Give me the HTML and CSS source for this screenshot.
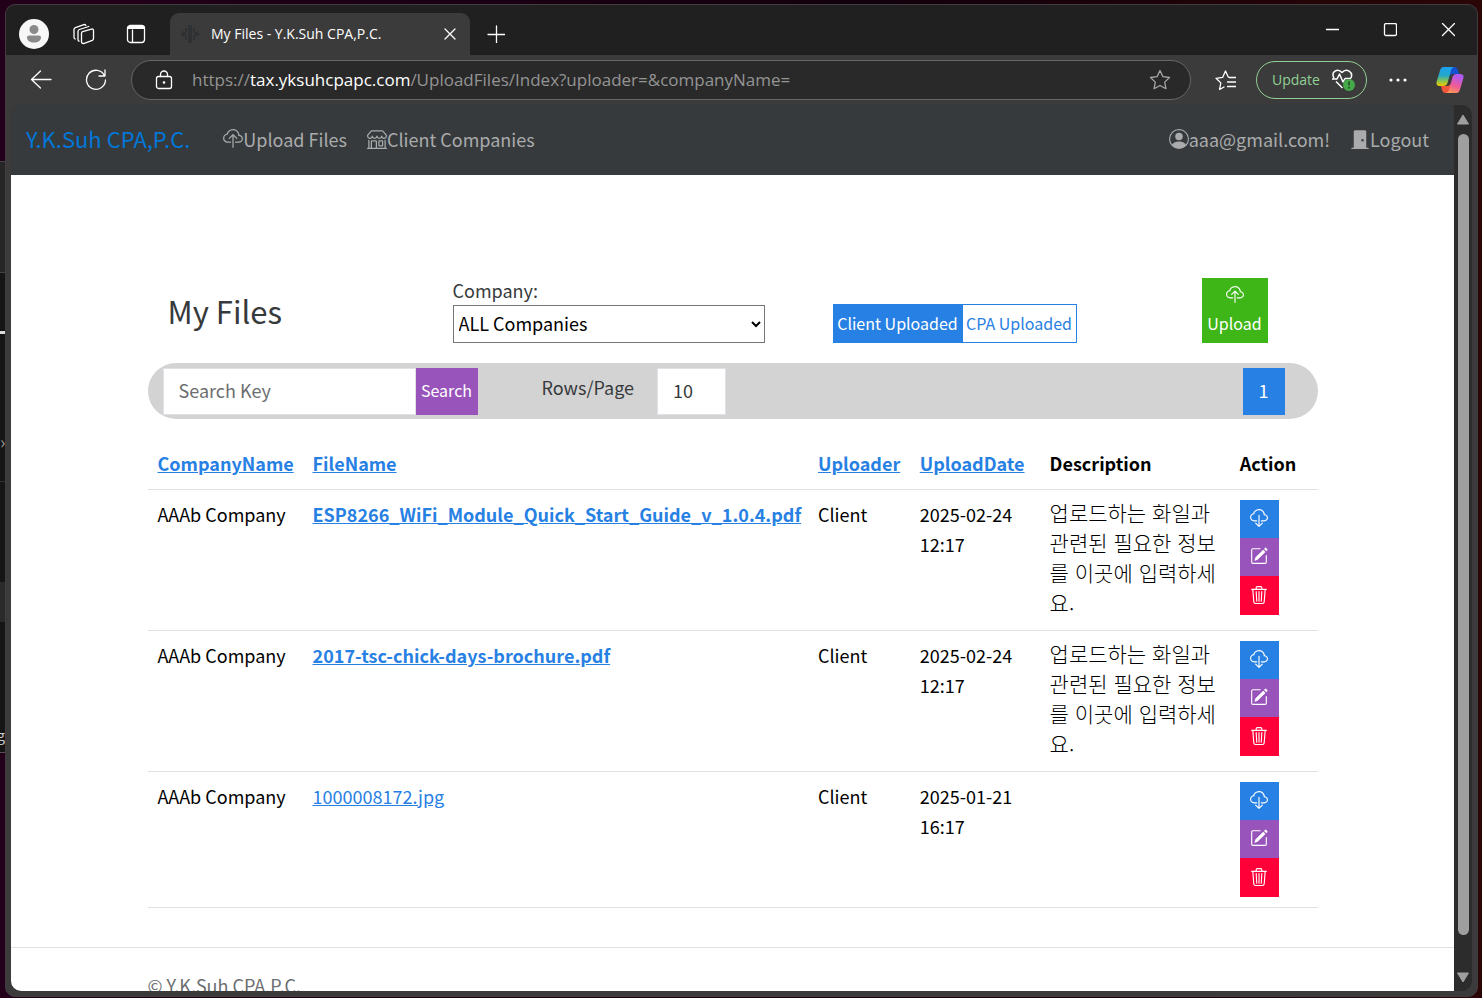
FILE: index.html
```html
<!DOCTYPE html>
<html lang="en">
<head>
    <meta charset="UTF-8">
    <meta name="viewport" content="width=device-width, initial-scale=1.0">
    <title>My Files - Y.K.Suh CPA,P.C.</title>
    <link rel="stylesheet" href="styles.css">
</head>
<body>
    <!-- Shared icons -->
    <svg class="sprite" aria-hidden="true">
        <symbol id="cloud-upload" viewBox="0 0 16 16">
            <path d="M4.406 1.342A5.53 5.53 0 0 1 8 0c2.69 0 4.923 2 5.166 4.579C14.758 4.804 16 6.137 16 7.773 16 9.569 14.502 11 12.687 11H10a.5.5 0 0 1 0-1h2.688C13.979 10 15 8.988 15 7.773c0-1.216-1.02-2.228-2.313-2.228h-.5v-.5C12.188 2.825 10.328 1 8 1a4.53 4.53 0 0 0-2.941 1.1c-.757.652-1.153 1.438-1.153 2.055v.448l-.445.049C2.064 4.805 1 5.952 1 7.318 1 8.785 2.23 10 3.781 10H6a.5.5 0 0 1 0 1H3.781C1.708 11 0 9.366 0 7.318c0-1.763 1.266-3.223 2.942-3.593.143-.863.698-1.723 1.464-2.383z"/>
            <path d="M7.646 4.146a.5.5 0 0 1 .708 0l3 3a.5.5 0 0 1-.708.708L8.5 5.707V14.5a.5.5 0 0 1-1 0V5.707L5.354 7.854a.5.5 0 1 1-.708-.708l3-3z"/>
        </symbol>
        <symbol id="cloud-download" viewBox="0 0 16 16">
            <path d="M4.406 1.342A5.53 5.53 0 0 1 8 0c2.69 0 4.923 2 5.166 4.579C14.758 4.804 16 6.137 16 7.773 16 9.569 14.502 11 12.687 11H10a.5.5 0 0 1 0-1h2.688C13.979 10 15 8.988 15 7.773c0-1.216-1.02-2.228-2.313-2.228h-.5v-.5C12.188 2.825 10.328 1 8 1a4.53 4.53 0 0 0-2.941 1.1c-.757.652-1.153 1.438-1.153 2.055v.448l-.445.049C2.064 4.805 1 5.952 1 7.318 1 8.785 2.23 10 3.781 10H6a.5.5 0 0 1 0 1H3.781C1.708 11 0 9.366 0 7.318c0-1.763 1.266-3.223 2.942-3.593.143-.863.698-1.723 1.464-2.383z"/>
            <path d="M7.646 15.854a.5.5 0 0 0 .708 0l3-3a.5.5 0 0 0-.708-.708L8.5 14.293V5.5a.5.5 0 0 0-1 0v8.793l-2.146-2.147a.5.5 0 0 0-.708.708l3 3z"/>
        </symbol>
        <symbol id="shop" viewBox="0 0 16 16">
            <path d="M2.97 1.35A1 1 0 0 1 3.73 1h8.54a1 1 0 0 1 .76.35l2.609 3.044A1.5 1.5 0 0 1 16 5.37v.255a2.375 2.375 0 0 1-4.25 1.458A2.371 2.371 0 0 1 9.875 8 2.37 2.37 0 0 1 8 7.083 2.37 2.37 0 0 1 6.125 8a2.37 2.37 0 0 1-1.875-.917A2.375 2.375 0 0 1 0 5.625V5.37a1.5 1.5 0 0 1 .361-.976l2.61-3.045zm1.78 4.275a1.375 1.375 0 0 0 2.75 0 .5.5 0 0 1 1 0 1.375 1.375 0 0 0 2.75 0 .5.5 0 0 1 1 0 1.375 1.375 0 1 0 2.75 0V5.37a.5.5 0 0 0-.12-.325L12.27 2H3.73L1.12 5.045A.5.5 0 0 0 1 5.37v.255a1.375 1.375 0 0 0 2.75 0 .5.5 0 0 1 1 0zM1.5 8.5A.5.5 0 0 1 2 9v6h1v-5a1 1 0 0 1 1-1h3a1 1 0 0 1 1 1v5h6V9a.5.5 0 0 1 1 0v6h.5a.5.5 0 0 1 0 1H.5a.5.5 0 0 1 0-1H1V9a.5.5 0 0 1 .5-.5zM4 15h3v-5H4v5zm5-5a1 1 0 0 1 1-1h2a1 1 0 0 1 1 1v3a1 1 0 0 1-1 1h-2a1 1 0 0 1-1-1v-3zm3 0h-2v3h2v-3z"/>
        </symbol>
        <symbol id="person-circle" viewBox="0 0 16 16">
            <path d="M11 6a3 3 0 1 1-6 0 3 3 0 0 1 6 0z"/>
            <path fill-rule="evenodd" d="M0 8a8 8 0 1 1 16 0A8 8 0 0 1 0 8zm8-7a7 7 0 0 0-5.468 11.37C3.242 11.226 4.805 10 8 10s4.757 1.225 5.468 2.37A7 7 0 0 0 8 1z"/>
        </symbol>
        <symbol id="door-closed" viewBox="0 0 16 16">
            <path d="M12 1a1 1 0 0 1 1 1v13h1.5a.5.5 0 0 1 0 1h-13a.5.5 0 0 1 0-1H3V2a1 1 0 0 1 1-1h8zm-2 9a1 1 0 1 0 0-2 1 1 0 0 0 0 2z"/>
        </symbol>
        <symbol id="pencil-square" viewBox="0 0 16 16">
            <path d="M15.502 1.94a.5.5 0 0 1 0 .706L14.459 3.69l-2-2L13.502.646a.5.5 0 0 1 .707 0l1.293 1.293zm-1.75 2.456-2-2L4.939 9.21a.5.5 0 0 0-.121.196l-.805 2.414a.25.25 0 0 0 .316.316l2.414-.805a.5.5 0 0 0 .196-.12l6.813-6.814z"/>
            <path d="M1 13.5A1.5 1.5 0 0 0 2.5 15h11a1.5 1.5 0 0 0 1.5-1.5v-6a.5.5 0 0 0-1 0v6a.5.5 0 0 1-.5.5h-11a.5.5 0 0 1-.5-.5v-11a.5.5 0 0 1 .5-.5H9a.5.5 0 0 0 0-1H2.5A1.5 1.5 0 0 0 1 2.5v11z"/>
        </symbol>
        <symbol id="trash" viewBox="0 0 16 16">
            <path d="M6.5 1h3a.5.5 0 0 1 .5.5v1H6v-1a.5.5 0 0 1 .5-.5ZM11 2.5v-1A1.5 1.5 0 0 0 9.5 0h-3A1.5 1.5 0 0 0 5 1.5v1H2.506a.58.58 0 0 0-.01 0H1.5a.5.5 0 0 0 0 1h.538l.853 10.66A2 2 0 0 0 4.885 16h6.23a2 2 0 0 0 1.994-1.84l.853-10.66h.538a.5.5 0 0 0 0-1h-.995a.59.59 0 0 0-.01 0H11Zm1.958 1-.846 10.58a1 1 0 0 1-.997.92h-6.23a1 1 0 0 1-.997-.92L3.042 3.5h9.916Zm-7.487 1a.5.5 0 0 1 .528.47l.5 8.5a.5.5 0 0 1-.998.06L5 5.03a.5.5 0 0 1 .47-.53Zm5.058 0a.5.5 0 0 1 .47.53l-.5 8.5a.5.5 0 1 1-.998-.06l.5-8.5a.5.5 0 0 1 .528-.47ZM8 4.5a.5.5 0 0 1 .5.5v8.5a.5.5 0 0 1-1 0V5a.5.5 0 0 1 .5-.5Z"/>
        </symbol>
    </svg>

    <!-- Sliver of the window behind -->
    <div class="behind">
        <div class="behind-head"></div>
        <div class="behind-gap"></div>
        <div class="behind-mark"></div>
        <div class="behind-body"><span>›</span></div>
        <div class="behind-list"></div>
        <div class="behind-row"></div>
        <div class="behind-foot"><span>g</span></div>
    </div>

    <div class="window">
        <header class="tabbar">
            <button class="profile" aria-label="Profile">
                <svg width="30" height="30" viewBox="0 0 30 30"><circle cx="15" cy="15" r="15" fill="#f7f7f7"/><circle cx="15" cy="10.500" r="4.500" fill="#8a8a8a"/><path d="M8 18.500q0-2 2-2h10q2 0 2 2c0 3-3 5-7 5s-7-2-7-5z" fill="#8a8a8a"/></svg>
            </button>
            <button class="chrome-btn" aria-label="Workspaces">
                <svg class="line" width="22" height="22" viewBox="0 0 22 22"><path d="M8.500 10.200q0-1.200 1.200-1.600l8.800-2.500q2-.5 2 1.500v8q0 1.200-1.200 1.700l-8 3q-2.800.8-2.800-1.800z"/><path d="M6 18.200q-1-.5-1-1.800V8.500q0-1.500 1.400-2l9.400-3M2.200 16q-1.200-.5-1.200-1.800V6.600q0-1.500 1.400-2l8.400-3q1.400-.4 2 .8"/></svg>
            </button>
            <button class="chrome-btn" aria-label="Tab actions">
                <svg class="line" width="20" height="20" viewBox="0 0 20 20"><rect x="1.500" y="1.500" width="17" height="17" rx="3"/><path d="M2.500 3.500h15" stroke-width="3"/><path d="M6.500 6v12"/></svg>
            </button>
            <div class="tab">
                <svg class="favicon" width="20" height="20" viewBox="0 0 20 20"><path d="M9 1v18M11 1v18M6 4v4l-2 2 2 2v4M14 4v4l2 2-2 2v4M3 7v6M17 7v6M0 10h3M17 10h3" fill="none" stroke="#2d3033" stroke-width="1.500"/></svg>
                <span class="tab-title">My Files - Y.K.Suh CPA,P.C.</span>
                <button class="chrome-btn tab-close" aria-label="Close tab">
                    <svg class="line" width="12" height="12" viewBox="0 0 12 12"><path d="M1 1l10 10M11 1L1 11"/></svg>
                </button>
            </div>
            <button class="chrome-btn new-tab" aria-label="New tab">
                <svg class="line" width="18" height="18" viewBox="0 0 18 18"><path d="M9.500 1v17M1 9.500h17"/></svg>
            </button>
            <div class="window-buttons">
                <button class="chrome-btn" aria-label="Minimize"><svg class="line" width="14" height="14" viewBox="0 0 14 14"><path d="M1.500 6.500h12"/></svg></button>
                <button class="chrome-btn" aria-label="Maximize"><svg class="line" width="14" height="14" viewBox="0 0 14 14"><rect x="1.500" y=".5" width="12" height="12" rx="1.500"/></svg></button>
                <button class="chrome-btn" aria-label="Close"><svg class="line" width="14" height="14" viewBox="0 0 14 14"><path d="M1.500.5l12 12M13.500.5l-12 12"/></svg></button>
            </div>
        </header>

        <div class="toolbar">
            <button class="chrome-btn nav-btn" aria-label="Back">
                <svg class="line" width="22" height="20" viewBox="0 0 22 20"><path d="M10.500 1L1.500 9.500l9 8.500M1.500 9.500H21"/></svg>
            </button>
            <button class="chrome-btn nav-btn" aria-label="Refresh">
                <svg class="line" width="22" height="22" viewBox="0 0 22 22"><path d="M19.500 6.500A9.500 9.500 0 1 0 20.500 11M20 1v6h-6"/></svg>
            </button>
            <div class="address">
                <svg class="line" width="18" height="20" viewBox="0 0 18 20"><rect x="1.500" y="6.500" width="15" height="12" rx="2"/><path d="M5.500 6.500V4.500a3.500 3.500 0 0 1 7 0v2"/><circle cx="9" cy="12.500" r=".7" fill="#fff"/></svg>
                <span class="url">https://<b>tax.yksuhcpapc.com</b>/UploadFiles/Index?uploader=&amp;companyName=</span>
                <button class="chrome-btn star" aria-label="Add to favorites">
                    <svg class="line" width="22" height="22" viewBox="0 0 22 22"><path d="M11 1.500l2.900 6.100 6.600.9-4.800 4.600 1.200 6.600-5.900-3.200-5.900 3.200 1.200-6.600L1.500 8.500l6.600-.9z"/></svg>
                </button>
            </div>
            <button class="chrome-btn favorites" aria-label="Favorites">
                <svg class="line" width="22" height="22" viewBox="0 0 22 22"><path d="M10 18L5.600 20.500l1.200-6.600L2 9.300l6.600-.9L11.500 2l2.500 5.500q.4 1 1.500 1H22M13.500 13H22M13.500 17.500H22"/></svg>
            </button>
            <button class="update">Update
                <svg width="24" height="22" viewBox="0 0 24 22"><path d="M3 9C-.5 3 6.500-1.500 11 3.500c4.500-5 11.500-.5 9 5.500M1 10h5l2.500-5 3.500 8 2-3.500h6M5 12.500l6.500 6.500" fill="none" stroke="#fff" stroke-width="1.500" stroke-linejoin="round"/><circle cx="18" cy="16" r="6" fill="#45a849"/><path d="M18 12.500v4M18 18v1.500" stroke="#24452a" stroke-width="1.500"/></svg>
            </button>
            <button class="chrome-btn more" aria-label="Settings and more">
                <svg width="18" height="4" viewBox="0 0 18 4" fill="#fff"><circle cx="2" cy="2" r="1.600"/><circle cx="9" cy="2" r="1.600"/><circle cx="16" cy="2" r="1.600"/></svg>
            </button>
            <button class="chrome-btn copilot" aria-label="Copilot">
                <svg width="28" height="28" viewBox="0 0 28 28">
                    <defs>
                        <linearGradient id="cpLeft" x1="0" y1="0" x2="0" y2="1"><stop offset="0" stop-color="#1ba0f2"/><stop offset=".45" stop-color="#25a8c8"/><stop offset=".75" stop-color="#8ec44a"/><stop offset="1" stop-color="#f5c400"/></linearGradient>
                        <linearGradient id="cpRight" x1="0.300" y1="0" x2="0" y2="1"><stop offset="0" stop-color="#b05af0"/><stop offset=".5" stop-color="#ee5a9a"/><stop offset="1" stop-color="#ffa04a"/></linearGradient>
                    </defs>
                    <path d="M15 1h3.500q2.500 0 3.300 2.500L23 8h-7l-3 2z" fill="#1450d0"/>
                    <path d="M13 27H9.500q-2.500 0-3.300-2.500L5 20h7l3-2z" fill="#f2553a"/>
                    <path d="M7.500 1H18q-2 0-2.800 2.700L11.500 17q-1 3-4 3H4Q-.5 20 .7 15.500L4 4.500Q5 1 7.500 1z" fill="url(#cpLeft)"/>
                    <path d="M20.500 27H10q2 0 2.800-2.700L16.500 11q1-3 4-3H24q4.500 0 3.300 4.500L24 23.500Q23 27 20.500 27z" fill="url(#cpRight)"/>
                </svg>
            </button>
        </div>

        <div class="viewport">
            <div class="page">
                <nav class="navbar">
                    <a class="brand" href="#">Y.K.Suh CPA,P.C.</a>
                    <a class="nav-link" href="#"><svg class="icon"><use href="#cloud-upload"/></svg>Upload Files</a>
                    <a class="nav-link" href="#"><svg class="icon"><use href="#shop"/></svg>Client Companies</a>
                    <a class="nav-link nav-user" href="#"><svg class="icon"><use href="#person-circle"/></svg>aaa@gmail.com!</a>
                    <a class="nav-link" href="#"><svg class="icon"><use href="#door-closed"/></svg>Logout</a>
                </nav>

                <main class="container">
                    <div class="page-head">
                        <h1>My Files</h1>
                        <div class="company">
                            <label for="company">Company:</label>
                            <select id="company"><option>ALL Companies</option></select>
                        </div>
                        <div class="btn-group">
                            <button class="btn btn-primary">Client Uploaded</button>
                            <button class="btn btn-outline">CPA Uploaded</button>
                        </div>
                        <button class="btn btn-upload"><svg class="icon"><use href="#cloud-upload"/></svg>Upload</button>
                    </div>

                    <form class="search-bar" onsubmit="return false">
                        <input class="search-key" type="text" placeholder="Search Key" aria-label="Search Key">
                        <button class="btn btn-search">Search</button>
                        <label class="rows-label" for="rows">Rows/Page</label>
                        <input class="rows" id="rows" type="text" value="10">
                        <a class="page-num" href="#">1</a>
                    </form>

                    <table class="files">
                        <colgroup>
                            <col class="col-company"><col class="col-file"><col class="col-uploader"><col class="col-date"><col class="col-desc"><col class="col-action">
                        </colgroup>
                        <thead>
                            <tr>
                                <th><a href="#">CompanyName</a></th>
                                <th><a href="#">FileName</a></th>
                                <th><a href="#">Uploader</a></th>
                                <th><a href="#">UploadDate</a></th>
                                <th>Description</th>
                                <th>Action</th>
                            </tr>
                        </thead>
                        <tbody>
                            <tr>
                                <td>AAAb Company</td>
                                <td><a class="unread" href="#">ESP8266_WiFi_Module_Quick_Start_Guide_v_1.0.4.pdf</a></td>
                                <td>Client</td>
                                <td>2025-02-24 12:17</td>
                                <td class="desc" lang="ko">업로드하는 화일과 관련된 필요한 정보를 이곳에 입력하세요.</td>
                                <td class="action-cell">
                                    <div class="actions">
                                        <button class="download" aria-label="Download"><svg class="icon"><use href="#cloud-download"/></svg></button>
                                        <button class="edit" aria-label="Edit"><svg class="icon"><use href="#pencil-square"/></svg></button>
                                        <button class="delete" aria-label="Delete"><svg class="icon"><use href="#trash"/></svg></button>
                                    </div>
                                </td>
                            </tr>
                            <tr>
                                <td>AAAb Company</td>
                                <td><a class="unread" href="#">2017-tsc-chick-days-brochure.pdf</a></td>
                                <td>Client</td>
                                <td>2025-02-24 12:17</td>
                                <td class="desc" lang="ko">업로드하는 화일과 관련된 필요한 정보를 이곳에 입력하세요.</td>
                                <td class="action-cell">
                                    <div class="actions">
                                        <button class="download" aria-label="Download"><svg class="icon"><use href="#cloud-download"/></svg></button>
                                        <button class="edit" aria-label="Edit"><svg class="icon"><use href="#pencil-square"/></svg></button>
                                        <button class="delete" aria-label="Delete"><svg class="icon"><use href="#trash"/></svg></button>
                                    </div>
                                </td>
                            </tr>
                            <tr>
                                <td>AAAb Company</td>
                                <td><a href="#">1000008172.jpg</a></td>
                                <td>Client</td>
                                <td>2025-01-21 16:17</td>
                                <td class="desc"></td>
                                <td class="action-cell">
                                    <div class="actions">
                                        <button class="download" aria-label="Download"><svg class="icon"><use href="#cloud-download"/></svg></button>
                                        <button class="edit" aria-label="Edit"><svg class="icon"><use href="#pencil-square"/></svg></button>
                                        <button class="delete" aria-label="Delete"><svg class="icon"><use href="#trash"/></svg></button>
                                    </div>
                                </td>
                            </tr>
                        </tbody>
                    </table>
                </main>

                <footer class="footer">
                    <div class="container">© Y.K.Suh CPA,P.C.</div>
                </footer>
            </div>
            <div class="scrollbar">
                <svg width="14" height="11" viewBox="0 0 14 11"><path d="M7 1l5.500 9h-11z" fill="#9f9f9f" stroke="#9f9f9f" stroke-linejoin="round"/></svg>
                <div class="thumb"></div>
                <svg width="14" height="11" viewBox="0 0 14 11"><path d="M7 10l5.500-9h-11z" fill="#9f9f9f" stroke="#9f9f9f" stroke-linejoin="round"/></svg>
            </div>
        </div>
    </div>
</body>
</html>
```
FILE: styles.css
```css
* { box-sizing: border-box; }

body {
    margin: 0;
    height: 100vh;
    display: flex;
    overflow: hidden;
    background: linear-gradient(90deg, #23001a, #12000c 60%, #2a0606);
    font-family: "Noto Sans CJK KR", "Noto Sans", sans-serif;
    font-size: 18px;
    line-height: 30px;
}

button, input, select {
    font: inherit;
    margin: 0;
    border-radius: 0;
}
button {
    border: 0;
    padding: 0;
    background: none;
    color: inherit;
}
svg { flex: none; display: block; }
.sprite { display: none; }
.icon { width: 20px; height: 20px; fill: currentColor; }
.line { fill: none; stroke: #fff; stroke-width: 1.3; stroke-linecap: round; stroke-linejoin: round; }

/* window behind, only its right edge shows */
.behind {
    width: 5px;
    padding-top: 161px;
    flex: none;
    display: flex;
    flex-direction: column;
    overflow: hidden;
    color: #999;
}
.behind-head { height: 112px; background: #262626; border-top: 1px solid #444; border-bottom: 1px solid #444; }
.behind-gap { height: 58px; background: #151515; }
.behind-mark { height: 3px; background: #ddd; }
.behind-body { height: 148px; padding-top: 92px; background: #151515; border-bottom: 1px solid #333; }
.behind-list { height: 100px; background: #151515; }
.behind-row { height: 40px; background: #2a2a2a; }
.behind-foot { height: 131px; padding-top: 96px; background: #151515; border-bottom: 1px solid #555; }
.behind-foot span { color: #ccc; font-size: 14px; margin-left: -3px; }

/* browser */
.window {
    flex: 1;
    min-width: 0;
    display: flex;
    flex-direction: column;
    margin: 4px 4px 1px 0;
    border: 1px solid #423c40;
    border-radius: 10px;
    background: #3b3b3b;
    color: #fff;
    overflow: hidden;
    font-family: "Open Sans", "Noto Sans", sans-serif;
}
.chrome-btn {
    flex: none;
    display: flex;
    align-items: center;
    justify-content: center;
}
.tabbar {
    height: 50px;
    flex: none;
    display: flex;
    align-items: center;
    padding: 8px 0 0 13px;
    background: #202020;
}
.tabbar > .chrome-btn { width: 52px; }
.profile { margin-right: 9px; }
.tab {
    align-self: stretch;
    width: 300px;
    display: flex;
    align-items: center;
    margin-left: 8px;
    padding: 0 14px 0 10px;
    background: #3b3b3b;
    border-radius: 9px 9px 0 0;
    font-size: 14px;
}
.tab-title { margin-left: 11px; }
.tab-close { margin-left: auto; }
.window-buttons {
    display: flex;
    align-self: flex-start;
    margin-left: auto;
    height: 34px;
}
.window-buttons .chrome-btn { width: 58px; }

.toolbar {
    height: 50px;
    flex: none;
    display: flex;
    align-items: center;
    padding: 0 13px 0 7px;
}
.nav-btn { width: 55px; }
.address {
    flex: 1;
    min-width: 0;
    height: 40px;
    display: flex;
    align-items: center;
    margin-left: 8px;
    padding: 0 19px 0 23px;
    background: #292929;
    border: 1px solid #666;
    border-radius: 20px;
}
.url { margin-left: 19px; font-size: 17px; color: #949494; white-space: nowrap; }
.url b { color: #fff; font-weight: 400; }
.star { margin-left: auto; }
.star .line { stroke: #a5a5a5; }
.favorites { width: 65px; padding-left: 2px; }
.update {
    width: 111px;
    height: 38px;
    display: flex;
    align-items: center;
    justify-content: space-between;
    padding: 0 11px 0 15px;
    border: 1px solid #92cf95;
    border-radius: 19px;
    color: #92cf95;
    font-size: 14px;
}
.more { width: 62px; }
.copilot { margin-left: 7px; }

.viewport {
    flex: 1;
    min-height: 0;
    display: flex;
    margin: 0 5px 5px;
    border-radius: 10px;
    overflow: hidden;
    background: #2c2c2c;
}
.page {
    flex: 1;
    min-width: 0;
    overflow: hidden;
    background: linear-gradient(#373a3c 70px, #fff 70px);
    color: #373a3c;
    font-family: "Noto Sans CJK KR", "Noto Sans", sans-serif;
}
.scrollbar {
    width: 18px;
    display: flex;
    flex-direction: column;
    align-items: center;
    gap: 9px;
    padding: 9px 0 8px;
}
.thumb { flex: 1; width: 11px; margin-bottom: 28px; border-radius: 6px; background: #9f9f9f; }

/* site */
.navbar {
    height: 70px;
    display: flex;
    align-items: center;
    gap: 20px;
    padding: 0 25px 2px 15px;
}
.brand { margin: 0 13px 2px 0; color: #0077d8; font-size: 22px; text-decoration: none; }
.nav-link { display: flex; align-items: center; color: #a9abac; text-decoration: none; }
.nav-user { margin-left: auto; }

.container { max-width: 1170px; margin: 0 auto; }
.page-head {
    display: grid;
    grid-template-columns: 305fr 380fr 369fr 116fr;
    align-items: end;
    padding: 100px 0 20px;
}
h1 { margin: 0 0 12px 20px; font-size: 31px; font-weight: 400; line-height: 40px; }
.company { display: flex; flex-direction: column; width: 312px; }
.company select { height: 38px; padding: 0 1px 2px; border: 1px solid #767676; background: #fff; color: #000; }

.btn { padding-bottom: 2px; font-size: 16px; line-height: 24px; color: #fff; white-space: nowrap; }
.btn-group { display: flex; }
.btn-primary { width: 130px; height: 39px; background: #2780e3; }
.btn-outline { width: 114px; height: 39px; border: 1px solid #2780e3; border-left: 0; color: #2780e3; }
.btn-upload {
    width: 66px;
    height: 65px;
    display: flex;
    flex-direction: column;
    align-items: center;
    justify-content: space-between;
    padding: 8px 0;
    background: #3fb618;
}
.btn .icon, .actions .icon { width: 18px; height: 18px; }

.search-bar {
    display: flex;
    align-items: center;
    height: 56px;
    padding: 0 33px 0 15px;
    background: #d3d3d3;
    border-radius: 28px;
}
.search-bar input {
    height: 47px;
    padding: 0 15px 2px;
    border: 1px solid #dee2e6;
    background: #fff;
    color: #373a3c;
}
.search-bar input::placeholder { color: #6c6e70; }
.search-key { width: 253px; }
.btn-search { width: 62px; height: 47px; background: #9954bb; }
.rows-label { margin: 0 23px 8px 64px; }
.rows { width: 69px; }
.page-num {
    width: 42px;
    height: 47px;
    margin-left: auto;
    background: #2780e3;
    color: #fff;
    line-height: 45px;
    text-align: center;
    text-decoration: none;
}

.files {
    width: 100%;
    margin: 20px 0 39px;
    table-layout: fixed;
    border-collapse: collapse;
    color: #000;
}
.col-company { width: 13.25%; }
.col-file { width: 43.2%; }
.col-uploader { width: 8.7%; }
.col-date { width: 11.1%; }
.col-desc { width: 16.25%; }
.col-action { width: 7.5%; }
.files th, .files td {
    padding: 9px 10px 11px;
    border-bottom: 1px solid #dee2e6;
    text-align: left;
    vertical-align: top;
}
.files a { color: #2780e3; }
.files .unread { font-weight: 700; }
.files .desc { padding: 7px 8px 13px 10px; font-size: 21px; font-weight: 300; }
.files .action-cell { padding: 10px; }
.actions { display: flex; flex-direction: column; width: 39px; }
.actions button {
    height: 38px;
    display: flex;
    align-items: center;
    justify-content: center;
    padding-bottom: 2px;
    color: #fff;
}
.actions .download { background: #2780e3; }
.actions .edit { background: #9954bb; }
.actions .delete { height: 39px; background: #ff0039; }

.footer { padding-top: 22px; border-top: 1px solid #dee2e6; color: #6c6e70; }
```
